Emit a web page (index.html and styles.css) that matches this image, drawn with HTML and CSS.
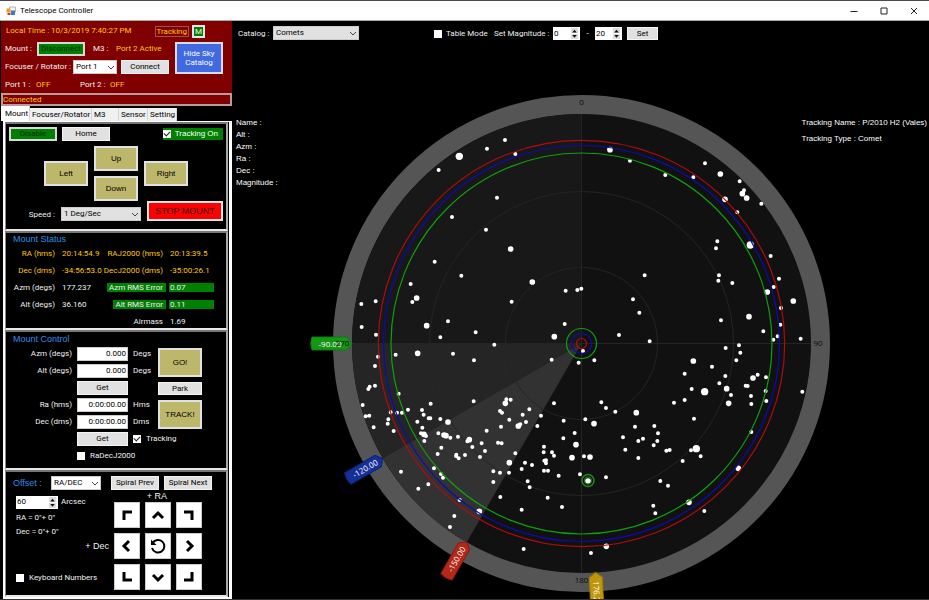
FILE: index.html
```html
<!DOCTYPE html>
<html lang="en">
<head>
<meta charset="utf-8">
<title>Telescope Controller</title>
<link rel="stylesheet" href="styles.css">
</head>
<body>
<div class="window">
  <header class="titlebar">
    <svg class="app-icon" viewBox="0 0 10 10" aria-hidden="true"><path fill="#f4f4f4" stroke="#888" stroke-width=".6" d="M3.5 1h6v5h-6z"/><path fill="#e8a020" d="M.5 2.500h4v4h-4z"/><path fill="#c8392b" d="M1.500 7h3v2h-3z"/><path fill="#3f78c8" d="M5 4.500h4v4.500h-4z"/></svg>
    <h1>Telescope Controller</h1>
    <div class="caption">
      <button aria-label="Minimize"><svg viewBox="0 0 8 8"><path d="M.5 4.500h7"/></svg></button>
      <button aria-label="Maximize"><svg viewBox="0 0 8 8"><path d="M1 1h6v6h-6z"/></svg></button>
      <button aria-label="Close"><svg viewBox="0 0 8 8"><path d="M1 1l6 6M7 1l-6 6"/></svg></button>
    </div>
  </header>

  <div class="content">
    <aside class="side">
      <section class="connection">
        <div class="row time-row">
          <span class="gold">Local Time : 10/3/2019 7:40:27 PM</span>
          <span class="badge">Tracking</span><span class="badge-m">M</span>
        </div>
        <div class="conn-body">
          <div class="row">
            <span class="c-label">Mount :</span><button class="btn green wide">Disconnect</button>
            <span class="c-m3">M3 :</span><span class="gold">Port 2 Active</span>
          </div>
          <div class="row">
            <label class="c-port" for="focuser">Focuser / Rotator :</label>
            <span class="pick port"><select id="focuser"><option>Port 1</option></select><svg viewBox="0 0 8 5"><path d="M1 1l3 3 3-3"/></svg></span>
            <button class="btn wide after">Connect</button>
          </div>
          <button class="btn blue hide-sky">Hide Sky Catalog</button>
        </div>
        <div class="row ports">
          <span>Port 1 :</span><span class="gold">OFF</span><span>Port 2 :</span><span class="gold">OFF</span>
        </div>
        <div class="status">Connected</div>
      </section>

      <nav class="tabs">
        <button class="tab on">Mount</button><button class="tab">Focuser/Rotator</button><button class="tab">M3</button><button class="tab">Sensor</button><button class="tab">Setting</button>
      </nav>

      <div class="page">
        <section class="panel motion">
          <div class="motion-top">
            <button class="btn green wide">Disable</button><button class="btn wide">Home</button>
            <label class="track-on"><input type="checkbox" checked>Tracking On</label>
          </div>
          <div class="dpad">
            <button class="btn khaki up">Up</button><button class="btn khaki left">Left</button>
            <button class="btn khaki right">Right</button><button class="btn khaki down">Down</button>
          </div>
          <div class="speed">
            <label for="speed">Speed :</label>
            <span class="pick grey"><select id="speed"><option>1 Deg/Sec</option></select><svg viewBox="0 0 8 5"><path d="M1 1l3 3 3-3"/></svg></span>
            <button class="btn stop">STOP MOUNT</button>
          </div>
        </section>

        <section class="panel state">
          <h2>Mount Status</h2>
          <dl>
            <dt class="gold">RA (hms)</dt><dd class="gold">20:14:54.9</dd><dt class="gold">RAJ2000 (hms)</dt><dd class="gold">20:13:39.5</dd>
            <dt class="gold">Dec (dms)</dt><dd class="gold">-34:56:53.0</dd><dt class="gold">DecJ2000 (dms)</dt><dd class="gold">-35:00:26.1</dd>
            <dt>Azm (degs)</dt><dd>177.237</dd><dt class="ok">Azm RMS Error</dt><dd class="ok">0.07</dd>
            <dt>Alt (degs)</dt><dd>36.160</dd><dt class="ok">Alt RMS Error</dt><dd class="ok">0.11</dd>
            <dt class="air">Airmass</dt><dd>1.69</dd>
          </dl>
        </section>

        <section class="panel control">
          <h2>Mount Control</h2>
          <div class="control-body">
            <div class="fields">
              <label for="azm">Azm (degs)</label><input id="azm" type="text" value="0.000"><span>Degs</span>
              <label for="alt">Alt (degs)</label><input id="alt" type="text" value="0.000"><span>Degs</span>
              <button class="btn get">Get</button>
              <label class="first" for="ra">Ra (hms)</label><input id="ra" type="text" value="0:00:00.00"><span>Hms</span>
              <label for="dec">Dec (dms)</label><input id="dec" type="text" value="0:00:00.00"><span>Dms</span>
              <button class="btn get">Get</button><label class="check"><input type="checkbox" checked>Tracking</label>
              <label class="check j2000"><input type="checkbox">RaDecJ2000</label>
            </div>
            <div class="actions">
              <button class="btn khaki">GO!</button><button class="btn">Park</button><button class="btn khaki">TRACK!</button>
            </div>
          </div>
        </section>

        <section class="panel offset">
          <div class="offset-top">
            <label class="heading" for="frame">Offset :</label>
            <span class="pick"><select id="frame"><option>RA/DEC</option></select><svg viewBox="0 0 8 5"><path d="M1 1l3 3 3-3"/></svg></span>
            <button class="btn wide">Spiral Prev</button><button class="btn wide">Spiral Next</button>
          </div>
          <div class="offset-body">
            <div class="offset-info">
              <div class="row"><span class="spin"><input id="step" type="text" value="60"><svg viewBox="0 0 8 12"><path d="M0 0h8v12h-8z"/><path class="sep" d="M0 6h8"/><path class="tri" d="M1.500 5h5L4 2zM1.500 7.500h5L4 10.500z"/></svg></span><label for="step">Arcsec</label></div>
              <p>RA = 0"+ 0"</p>
              <p>Dec = 0"+ 0"</p>
              <p class="axis">+ Dec</p>
              <label class="check keys"><input type="checkbox">Keyboard Numbers</label>
            </div>
            <div class="pad-side">
              <p class="axis">+ RA</p>
              <div class="pad">
                <button aria-label="Up left"><svg viewBox="0 0 24 24"><path d="M9 17V9h8"/></svg></button>
                <button aria-label="Up"><svg viewBox="0 0 24 24"><path d="M7 15l5-5 5 5"/></svg></button>
                <button aria-label="Up right"><svg viewBox="0 0 24 24"><path d="M7 9h8v8"/></svg></button>
                <button aria-label="Left"><svg viewBox="0 0 24 24"><path d="M14 7l-5 5 5 5"/></svg></button>
                <button aria-label="Reset"><svg viewBox="0 0 24 24"><path class="thin" d="M6.500 9.200A6.300 6.300 0 1 1 6 14"/><path class="head" d="M5 5.500v5.500h5.500z"/></svg></button>
                <button aria-label="Right"><svg viewBox="0 0 24 24"><path d="M10 7l5 5-5 5"/></svg></button>
                <button aria-label="Down left"><svg viewBox="0 0 24 24"><path d="M9 7v8h8"/></svg></button>
                <button aria-label="Down"><svg viewBox="0 0 24 24"><path d="M7 10l5 5 5-5"/></svg></button>
                <button aria-label="Down right"><svg viewBox="0 0 24 24"><path d="M7 15h8V7"/></svg></button>
              </div>
            </div>
          </div>
        </section>
      </div>
    </aside>

    <main class="sky">
      <svg class="map" viewBox="232 21 697 578" role="img" aria-label="Sky map">
        <circle cx="581.5" cy="343.5" r="239" fill="#111" stroke="#555" stroke-width="19"/>
        <path fill="#181818" d="M581.5 343.5V114A229.5 229.5 0 0 0 352 343.5z"/>
        <path fill="#252525" d="M581.5 343.5H352A229.5 229.5 0 0 0 382.8 458.2z"/>
        <path fill="#323232" d="M581.5 343.5L382.8 458.2A229.5 229.5 0 0 0 466.7 542.3z"/>
        <g fill="none" stroke="#242424">
          <circle cx="581.5" cy="343.5" r="76"/><circle cx="581.5" cy="343.5" r="152"/>
          <path d="M581.5 114v459M352 343.5h459"/>
        </g>
        <g class="stars">
          <g transform="translate(230 0) scale(.3333)">
            <path class="s" d="M626 510h0M771 446h0M825 420h0M856 462h0M1200 482h0M1306 525h0M801 593h0"/>
            <path class="m" d="M1140 449h0"/><path class="l" d="M688 469h0"/>
          </g>
          <g transform="translate(660 0) scale(.3333)">
            <path class="s" d="M135 490h0M100 532h0M239 544h0M252 571h0M304 611h0M232 637h0M172 724h0M168 745h0M332 768h0"/>
            <path class="m" d="M181 522h0M195 598h0M247 581h0M260 594h0"/><path class="l" d="M271 735h0"/>
          </g>
          <g transform="translate(300 180) scale(.3333)">
            <path class="s" d="M456 111h0M558 149h0M404 245h0M484 287h0M332 312h0M337 366h0M227 364h0M184 372h0M185 441h0M228 464h0M234 530h0M225 558h0M635 365h0M444 424h0M421 472h0M527 457h0M583 494h0M459 521h0M522 541h0M287 524h0M755 539h0"/>
            <path class="m" d="M632 207h0M697 306h0M350 354h0M380 437h0M353 520h0M763 470h0"/>
          </g>
          <g transform="translate(560 180) scale(.3333)">
            <path class="s" d="M657 296h0M641 321h0M663 384h0M661 434h0M653 469h0M640 479h0M722 476h0M610 454h0M483 421h0M477 286h0M475 302h0M517 309h0M254 286h0M219 358h0M238 398h0M177 465h0M269 484h0M14 432h0M17 332h0M52 330h0M64 326h0M69 513h0M56 548h0M103 541h0M497 504h0M537 496h0M541 518h0M529 541h0"/>
            <path class="m" d="M622 336h0M700 363h0M567 410h0"/>
          </g>
          <g transform="translate(300 380) scale(.3333)">
            <path class="s" d="M209 20h0M205 27h0M225 17h0M188 75h0M197 109h0M208 107h0M221 142h0M265 118h0M263 131h0M272 97h0M281 153h0M291 98h0M306 98h0M296 41h0M324 89h0M366 90h0M371 104h0M392 71h0M352 125h0M367 143h0M421 117h0M415 160h0M451 173h0M474 170h0M363 160h0M378 168h0M373 183h0M424 203h0M413 222h0M468 228h0M476 235h0M495 225h0M517 201h0M545 190h0M555 213h0M560 152h0M521 64h0M540 231h0M402 265h0M423 282h0M429 293h0M303 275h0M355 326h0M385 313h0M479 360h0M463 408h0M450 441h0M502 184h0M386 115h0M391 115h0M469 224h0"/>
            <path class="m" d="M444 126h0M432 165h0M438 167h0M372 163h0M508 179h0M538 394h0"/>
          </g>
          <g transform="translate(490 380) scale(.3333)">
            <path class="s" d="M192 70h0M334 67h0M348 84h0M376 95h0M221 122h0M286 118h0M254 159h0M220 175h0M435 140h0M399 172h0M459 176h0M406 209h0M445 183h0M445 234h0M49 58h0M62 59h0M30 93h0M36 98h0M118 88h0M98 104h0M153 107h0M58 119h0M108 126h0M142 138h0M33 140h0M91 133h0M24 188h0M35 190h0M76 220h0M105 248h0M126 255h0M95 267h0M57 278h0M10 274h0M30 278h0M10 306h0M113 304h0M119 322h0M162 200h0M161 217h0M186 217h0M192 227h0M168 250h0M163 242h0M168 241h0M162 272h0M174 272h0M206 287h0M270 283h0M282 229h0M348 292h0M173 353h0M216 381h0M95 389h0M31 351h0M101 507h0M303 519h0"/>
            <path class="m" d="M439 98h0M312 131h0M258 194h0M246 233h0M300 231h0M58 248h0M46 70h0M85 138h0M349 499h0M294 303h0"/>
          </g>
          <g transform="translate(650 360) scale(.3333)">
            <path class="s" d="M186 20h0M104 41h0M226 48h0M208 70h0M125 87h0M104 120h0M72 128h0M243 105h0M323 44h0M348 52h0M303 108h0M304 132h0M347 93h0M349 123h0M457 95h0M132 176h0M304 216h0M13 198h0M24 220h0M22 243h0M11 256h0M49 272h0M59 270h0M123 271h0M152 289h0M98 303h0M31 363h0M54 377h0M10 437h0M16 460h0M163 453h0M287 77h0M293 78h0"/>
            <path class="m" d="M130 3h0M309 54h0M230 86h0M236 130h0M265 325h0M117 427h0"/><path class="l" d="M164 95h0M139 266h0"/>
          </g>
        </g>
        <g fill="none">
          <g stroke="#b00c0c" stroke-width="1.200"><circle cx="581.5" cy="343.5" r="203.200"/><circle cx="581.5" cy="343.5" r="5"/></g>
          <g stroke="#0c0cb4" stroke-width="1.200"><circle cx="581.5" cy="343.5" r="198"/><circle cx="581.5" cy="343.5" r="10"/></g>
          <g stroke="#0fa00f" stroke-width="1.200"><circle cx="581.5" cy="343.5" r="190.500"/><circle cx="581.5" cy="343.5" r="15"/></g>
          <g stroke="#1f8a1a" stroke-width="1.500"><circle cx="588" cy="480.500" r="6"/><circle cx="588" cy="480.500" r="3.600" stroke-width="1"/></g>
        </g>
        <g class="tag" transform="translate(352 343.5)"><path fill="#159615" stroke="#0f7a0f" d="M0 0L-5 -6.500H-40Q-42.500 0 -40 6.500H-5z"/><text x="-22" y="3">-90.00</text></g>
        <g class="tag" transform="translate(382.500 458.500) rotate(-30)"><path fill="#143096" stroke="#0f2478" d="M0 0L-5 -6.500H-40Q-42.500 0 -40 6.500H-5z"/><text x="-20" y="3">-120.00</text></g>
        <g class="tag" transform="translate(466.500 542) rotate(-60)"><path fill="#b4281a" stroke="#8c1c12" d="M0 0L-5 -6.500H-40Q-42.500 0 -40 6.500H-5z"/><text x="-20" y="3">-150.00</text></g>
        <g class="tag" transform="translate(595.500 572.500) rotate(87)"><path fill="#be960c" stroke="#a07c08" d="M0 0L5 -6.500H42V6.500H5z"/><text x="21" y="3">176.24</text></g>
        <g class="bearing"><text x="581.5" y="105">0</text><text x="818" y="346">90</text><text x="581.5" y="583">180</text><text x="342.500" y="346">270</text></g>
      </svg>

      <div class="toolbar">
        <label class="cat-label" for="catalog">Catalog :</label>
        <span class="pick grey catalog"><select id="catalog"><option>Comets</option></select><svg viewBox="0 0 8 5"><path d="M1 1l3 3 3-3"/></svg></span>
        <label class="check table-mode"><input type="checkbox">Table Mode</label>
        <label class="mag" for="mag-min">Set Magnitude :</label>
        <span class="spin small"><input id="mag-min" type="text" value="0"><svg viewBox="0 0 8 12"><path d="M0 0h8v12h-8z"/><path class="sep" d="M0 6h8"/><path class="tri" d="M1.500 5h5L4 2zM1.500 7.500h5L4 10.500z"/></svg></span>
        <span class="dash">-</span>
        <span class="spin small"><input aria-label="Maximum magnitude" type="text" value="20"><svg viewBox="0 0 8 12"><path d="M0 0h8v12h-8z"/><path class="sep" d="M0 6h8"/><path class="tri" d="M1.500 5h5L4 2zM1.500 7.500h5L4 10.500z"/></svg></span>
        <button class="btn set">Set</button>
      </div>
      <div class="details">
        <ul><li>Name :</li><li>Alt :</li><li>Azm :</li><li>Ra :</li><li>Dec :</li><li>Magnitude :</li></ul>
        <div class="target"><p>Tracking Name : P/2010 H2 (Vales)</p><p>Tracking Type : Comet</p></div>
      </div>
    </main>
  </div>
</div>
</body>
</html>
```
FILE: styles.css
```css
* { box-sizing: border-box; }
body, h1, h2, p, ul, dl, dd { margin: 0; padding: 0; font-weight: normal; }
body {
  background: #000;
  color: #f0f0f0;
  font: 8px/12px Roboto, "Liberation Sans", sans-serif;
  white-space: nowrap;
}
button, input, select { font: inherit; color: #000; margin: 0; padding: 0; border-radius: 0; }
ul { list-style: none; }
.window { min-height: 100vh; display: flex; flex-direction: column; border-top: 1px solid #4a4a4a; border-bottom: 1px solid #333; }

/* title bar */
.titlebar { height: 20px; background: #fff; color: #000; display: flex; align-items: center; padding-left: 6px; border-bottom: 1px solid #aaa; }
.app-icon { width: 10px; height: 10px; margin-right: 4px; }
.titlebar h1 { font: 8px/12px Roboto, sans-serif; }
.caption { margin-left: auto; display: flex; }
.caption button { width: 30px; height: 18px; border: 0; background: none; display: grid; place-items: center; }
.caption svg { width: 8px; height: 8px; fill: none; stroke: #222; }

.content { flex: 1; display: flex; }
.side { width: 232px; flex: none; padding-left: 1px; display: flex; flex-direction: column; }
.sky { flex: 1; position: relative; min-width: 0; }

/* shared controls */
.gold { color: #ffc800; }
.row { display: flex; align-items: center; height: 18px; }
.btn { border: 1px solid #f4f4f4; background: #e1e1e1; height: 14px; line-height: 12px; text-align: center; }
.btn.wide { width: 48px; }
.btn.green { background: #008000; border: 2px solid #d8d8d8; color: #042804; line-height: 10px; }
.btn.khaki { background: #bdb76b; border: 2px solid #e1e1e1; height: auto; font: 8px/12px "Liberation Sans", sans-serif; }
.btn.blue { background: #4169e1; border: 2px solid #d8dcec; color: #fff; white-space: normal; }
.pick { display: flex; position: relative; height: 14px; }
.pick select { appearance: none; width: 100%; border: 1px solid #ccc; background: #fff; padding-left: 2px; line-height: 12px; }
.pick.grey select { background: #e1e1e1; }
.pick svg { position: absolute; right: 2px; top: 5px; width: 8px; height: 5px; fill: none; stroke: #444; pointer-events: none; }
.spin { display: flex; width: 42px; height: 13px; background: #fff; padding: 1px; }
.spin input { flex: 1; min-width: 0; border: 0; background: none; }
.spin svg { width: 9px; height: 11px; fill: #dcdcdc; }
.spin .sep { stroke: #fff; }
.spin .tri { fill: #111; }
input[type="checkbox"] { appearance: none; width: 8px; height: 8px; background: #fff; flex: none; display: grid; place-items: center; }
input[type="checkbox"]:checked::before { content: ""; width: 5px; height: 3px; border: solid #222; border-width: 0 0 1px 1px; transform: translateY(-1px) rotate(-45deg); }
.check { display: flex; align-items: center; gap: 5px; }

/* connection panel */
.connection { background: #800000; }
.connection .row { padding-left: 5px; }
.connection .time-row { padding-top: 2px; }
.badge { margin-left: auto; border: 1px solid #a05050; color: #ffc800; line-height: 9px; padding: 0 1px; }
.badge-m { width: 13px; height: 13px; border: 2px solid #e4e4e4; background: #008000; line-height: 9px; text-align: center; margin: 0 27px 0 3px; }
.conn-body { display: grid; grid-template-columns: 174px 48px; grid-template-rows: 18px 18px; padding-top: 1px; }
.hide-sky { grid-column: 2; grid-row: 1 / 3; height: 32px; align-self: center; line-height: 9px; padding: 0 2px; }
.connection .conn-body .row { padding-left: 4px; }
.c-label { width: 32px; }
.c-m3 { width: 23px; margin-left: 8px; }
.c-port { width: 68px; }
.port { width: 44px; }
.after { margin-left: 4px; }
.connection .ports { display: grid; grid-template-columns: 31px 44px 30px 30px; height: 17px; padding-left: 4px; }
.status { border: 2px solid #b89c9c; color: #ffc800; height: 13px; line-height: 10px; }

/* tabs */
.tabs { display: grid; grid-template-columns: 29px 62px 27px 29px 29px; align-items: end; height: 15px; }
.tab { border: 0; border-right: 1px solid #d4d4d4; background: #f0f0f0; height: 13px; padding: 0 0 0 2px; line-height: 13px; text-align: left; }
.tab.on { background: #fff; height: 15px; padding-left: 4px; }

.page { flex: 1; margin-left: 2px; border: solid #fff; border-width: 1px 3px 2px 2px; background: #000; display: flex; flex-direction: column; }
.panel { border: 2px solid #888; border-color: #777 #aaa #e8e8e8 #888; border-left-width: 1px; margin-right: 1px; }
h2, .heading { font: 9px/12px "Liberation Sans", sans-serif; color: #2e8ce6; }

/* motion */
.motion { padding: 3px 3px 0; height: 109px; }
.motion-top { display: flex; gap: 5px; align-items: center; }
.track-on { margin-left: auto; background: #008000; color: #fff; display: flex; align-items: center; gap: 4px; height: 12px; padding-right: 5px; font: 8px/12px "Liberation Sans", sans-serif; }
.dpad { display: grid; grid-template: 15px 10px 5px 10px 15px / repeat(3, 44px); column-gap: 6px; margin: 5px 0 0 35px; }
.up { grid-area: 1 / 2 / 3 / 3; }
.down { grid-area: 4 / 2 / 6 / 3; }
.left { grid-area: 2 / 1 / 5 / 2; }
.right { grid-area: 2 / 3 / 5 / 4; }
.speed { display: grid; grid-template-columns: 46px 80px 76px; gap: 6px; align-items: end; }
.speed label { text-align: right; }
.stop.stop { height: 20px; background: #f00; border: 2px solid #e4e4e4; color: #300; font: 9px/16px "Liberation Sans", sans-serif; }

/* status */
.state { padding: 0 12px 0 7px; height: 99px; }
.state dl { display: grid; grid-template-columns: 45px 46px 56px 1fr; grid-auto-rows: 17px; column-gap: 3px; align-items: center; line-height: 9px; }
.state dt { justify-self: end; padding: 0 3px 0 2px; }
.state dd { padding-left: 1px; }
.state .ok { background: #008000; }
.air { grid-column: 3; }

/* control */
.control { padding: 1px 7px 0; height: 140px; }
.control-body { display: flex; gap: 4px; }
.fields { display: grid; grid-template-columns: 59px 51px 21px; grid-auto-rows: 17px; column-gap: 5px; align-items: center; }
.fields label:not(.check) { text-align: right; }
.fields .first { grid-column: 1; }
.fields input[type="text"] { width: 51px; height: 14px; border: 1px solid #ccc; background: #fff; text-align: right; padding-right: 1px; }
.get { grid-column: 2; }
.j2000 { grid-column: 2; }
.actions { display: flex; flex-direction: column; gap: 5px; width: 44px; padding-top: 3px; }
.actions .btn { height: 13px; }
.actions .khaki { height: 29px; }

/* offset */
.offset { flex: 1; padding: 4px 7px 0; }
.offset-top { display: flex; gap: 5px; align-items: center; }
.offset-top .heading { width: 33px; }
.offset-top .pick { width: 50px; margin-right: 5px; }
.offset-body { display: flex; }
.offset-info { width: 101px; padding: 5px 5px 0 3px; line-height: 14px; }
.offset-info .row { height: 14px; gap: 3px; margin-bottom: 2px; }
.axis { font: 9px/12px "Liberation Sans", sans-serif; }
.offset-info .axis { text-align: right; margin-top: 1px; }
.keys { margin-top: 19px; }
.pad-side .axis { text-align: center; padding-right: 2px; }
.pad { display: grid; grid-template: repeat(3, 26px) / repeat(3, 26px); gap: 5px; }
.pad button { background: #fff; border: 1px solid #ccc; }
.pad svg { display: block; width: 24px; height: 24px; fill: none; stroke: #000; stroke-width: 3; }
.pad .thin { stroke-width: 2; }
.pad .head { fill: #000; stroke: none; }

/* sky map */
.map { position: absolute; inset: 0; width: 100%; height: 100%; }
.stars path { stroke: #fff; stroke-linecap: round; }
.s { stroke-width: 12; }
.m { stroke-width: 17; }
.l { stroke-width: 22; }
.map text { text-anchor: middle; font: 8px "Open Sans", sans-serif; }
.tag text { fill: #fff; }
.bearing text { fill: #0a0a0a; }
.toolbar { position: relative; display: flex; align-items: center; height: 25px; padding-left: 6px; }
.cat-label { width: 35px; }
.catalog { width: 86px; margin: 0 75px 2px 0; }
.table-mode { width: 60px; gap: 4px; }
.mag { width: 59px; }
.small { width: 27px; }
.dash { width: 15px; text-align: center; }
.set { width: 31px; margin-left: 5px; height: 13px; line-height: 11px; }
.details { position: relative; display: flex; justify-content: space-between; padding: 71px 2px 0 4px; color: #fff; font: 8px/12px "Liberation Sans", sans-serif; }
.target p { margin-bottom: 4px; }
```
